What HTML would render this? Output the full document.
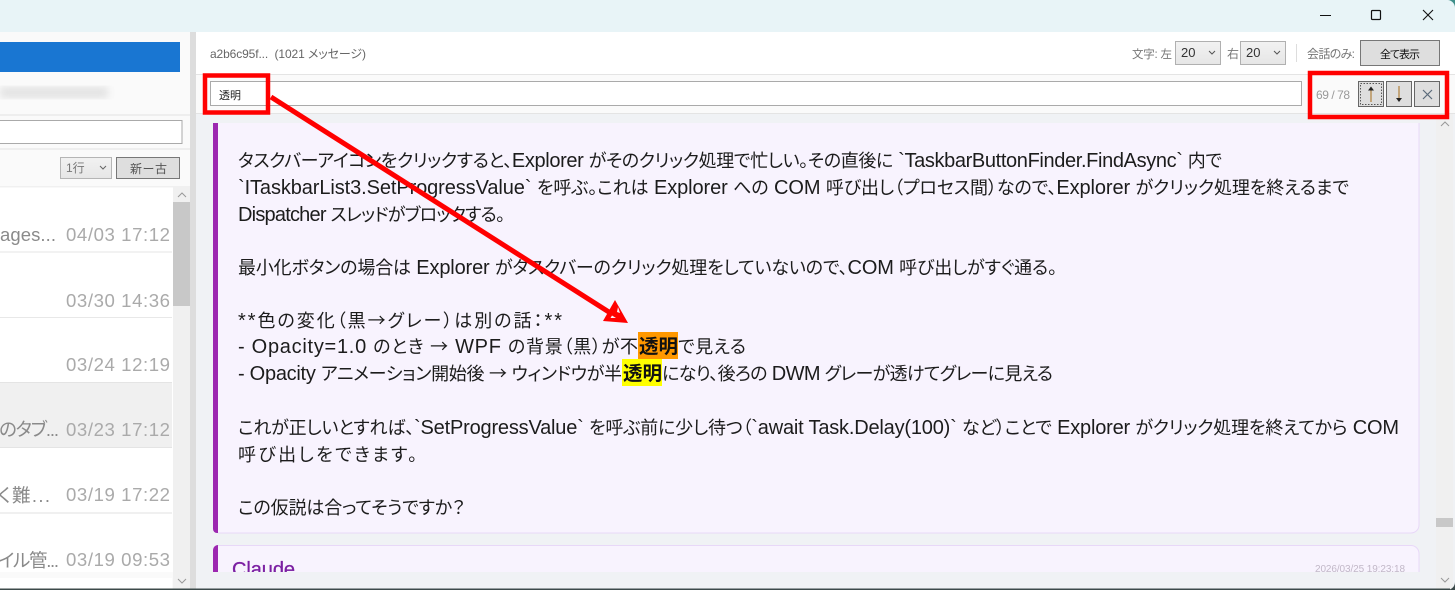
<!DOCTYPE html>
<html lang="ja"><head><meta charset="utf-8"><style>
html,body{margin:0;padding:0;width:1455px;height:590px;overflow:hidden;background:#f0f2f5}
svg{display:block}
text{font-family:"Liberation Sans","Noto Sans CJK JP",sans-serif;white-space:pre;font-feature-settings:"palt"}
.m{font-size:18px;fill:#1c1c1c}
.l{font-size:20px}
.d{font-size:18.600px;fill:#aaa}
.s{font-size:18.500px;fill:#8a8a8a}
.u{font-size:12px;fill:#777}
.a{font-family:"Noto Sans CJK JP",sans-serif}
</style></head><body>
<svg width="1455" height="590" viewBox="0 0 1455 590" xmlns="http://www.w3.org/2000/svg">
<defs>
<linearGradient id="sel" x1="0" y1="0" x2="0" y2="1"><stop offset="0" stop-color="#f2f2f2"/><stop offset="1" stop-color="#e6e6e6"/></linearGradient>
<filter id="bl"><feGaussianBlur stdDeviation="4"/></filter>
</defs>
<rect width="1455" height="590" fill="#f0f2f5"/>
<!-- title bar -->
<rect width="1455" height="32" fill="#e8f4f7"/>
<path d="M1320 15.500h11" stroke="#111" stroke-width="1"/>
<rect x="1371.500" y="10.500" width="9" height="9" rx="1" fill="none" stroke="#111" stroke-width="1.200"/>
<path d="M1423 10l10 10M1433 10l-10 10" stroke="#111" stroke-width="1.100"/>
<!-- left panel -->
<rect x="0" y="32" width="190" height="558" fill="#fafafa"/>
<rect x="0" y="42" width="180" height="30" fill="#1976d2"/>
<g filter="url(#bl)"><rect x="0" y="87" width="108" height="11" fill="#e2e2e2"/></g>
<rect x="0" y="114" width="190" height="2" fill="#eee"/>
<rect x="-2" y="120.500" width="184" height="23" fill="#fff" stroke="#aaa"/>
<rect x="0" y="148" width="190" height="2" fill="#eee"/>
<rect x="60.500" y="157.500" width="51" height="21" fill="url(#sel)" stroke="#b5b5b5"/>
<text x="66" y="172" class="u">1行</text>
<path d="M100 166l3 3 3-3" fill="none" stroke="#666"/>
<rect x="116.500" y="157.500" width="63" height="21" fill="#dedede" stroke="#777"/>
<text x="130" y="173" style="font-size:12px;fill:#555" textLength="37" lengthAdjust="spacing">新 ー 古</text>
<rect x="0" y="186" width="173" height="386" fill="#fff"/>
<rect x="0" y="186" width="190" height="1.500" fill="#f0f0f0"/>
<rect x="0" y="382" width="172" height="65" fill="#f0f0f0"/>
<rect x="0" y="251" width="172" height="2" fill="#f2f2f2"/>
<rect x="0" y="317" width="172" height="1" fill="#e8e8e8"/>
<rect x="0" y="382" width="172" height="1" fill="#e4e4e4"/>
<rect x="0" y="447" width="172" height="1" fill="#e4e4e4"/>
<rect x="0" y="512" width="172" height="2" fill="#f0f0f0"/>
<rect x="0" y="578" width="172" height="12" fill="#fff"/>
<rect x="173" y="186" width="17" height="404" fill="#f0f0f0"/>
<rect x="173" y="202" width="17" height="104" fill="#c8c8c8"/>
<path d="M178 197l4-4 4 4M178 579l4 4 4-4" fill="none" stroke="#999" stroke-width="1"/>
<text class="s" x="0" y="241" textLength="56" lengthAdjust="spacing">ages...</text>
<text class="s" x="-1" y="436" textLength="60" lengthAdjust="spacing">のタブ...</text>
<text class="s" x="-2" y="502" textLength="52" lengthAdjust="spacing">く難...</text>
<text class="s" x="-2" y="567" textLength="61" lengthAdjust="spacing">イル管...</text>
<text class="d" x="66" y="241" textLength="104" lengthAdjust="spacing">04/03 17:12</text>
<text class="d" x="66" y="307" textLength="104" lengthAdjust="spacing">03/30 14:36</text>
<text class="d" x="66" y="371" textLength="104" lengthAdjust="spacing">03/24 12:19</text>
<text class="d" x="66" y="436" textLength="104" lengthAdjust="spacing">03/23 17:12</text>
<text class="d" x="66" y="501" textLength="104" lengthAdjust="spacing">03/19 17:22</text>
<text class="d" x="66" y="566" textLength="104" lengthAdjust="spacing">03/19 09:53</text>
<!-- splitter -->
<rect x="190" y="32" width="6" height="558" fill="#ddd"/>
<!-- right header -->
<rect x="196" y="32" width="1259" height="42" fill="#fff"/>
<rect x="196" y="74" width="1259" height="1" fill="#e4e4e4"/>
<rect x="196" y="75" width="1259" height="38" fill="#fafafa"/>
<rect x="196" y="113" width="1259" height="1" fill="#e4e4e4"/>
<text x="210" y="58" style="font-size:12px;fill:#666" textLength="156" lengthAdjust="spacing">a2b6c95f...  (1021 メッセージ)</text>
<text x="1132" y="58" style="font-size:11.500px;fill:#777" textLength="40" lengthAdjust="spacing">文字: 左</text>
<rect x="1175.500" y="41.500" width="45" height="23" fill="url(#sel)" stroke="#b0b0b0"/>
<text x="1181" y="57" style="font-size:13px;fill:#333">20</text>
<path d="M1209 51l3 3 3-3" fill="none" stroke="#555"/>
<text x="1227" y="58" style="font-size:12px;fill:#777">右</text>
<rect x="1240.500" y="41.500" width="45" height="23" fill="url(#sel)" stroke="#b0b0b0"/>
<text x="1246" y="57" style="font-size:13px;fill:#333">20</text>
<path d="M1274 51l3 3 3-3" fill="none" stroke="#555"/>
<rect x="1296" y="44" width="1" height="18" fill="#ddd"/>
<text x="1307" y="58" style="font-size:12px;fill:#777" textLength="48" lengthAdjust="spacing">会話のみ:</text>
<rect x="1360.500" y="40.500" width="79" height="25" fill="#dedede" stroke="#777"/>
<text x="1380" y="58" style="font-size:11px;fill:#111" textLength="40" lengthAdjust="spacing">全て表示</text>
<!-- search -->
<rect x="210.500" y="81.500" width="1091" height="24" fill="#fff" stroke="#aaa"/>
<text x="219" y="99" style="font-size:11px;fill:#222">透明</text>
<text x="1316" y="99" style="font-size:12px;fill:#999" textLength="34" lengthAdjust="spacing">69 / 78</text>
<rect x="1358.500" y="81.500" width="25" height="25" fill="#dedede" stroke="#666"/>
<rect x="1360.500" y="83.500" width="21" height="21" fill="none" stroke="#555" stroke-dasharray="1.500 1.500"/>
<path d="M1371 102V89" stroke="#b8925a" stroke-width="1.500"/><path d="M1368 90.500l3-4 3 4z" fill="#222"/>
<rect x="1386.500" y="81.500" width="25" height="25" fill="#dedede" stroke="#666"/>
<path d="M1399 86v13" stroke="#b8925a" stroke-width="1.500"/><path d="M1396 98l3 4 3-4z" fill="#222"/>
<rect x="1414.500" y="81.500" width="25" height="25" fill="#dedede" stroke="#666"/>
<path d="M1423 90l9 9M1432 90l-9 9" stroke="#5a6a7a" stroke-width="1.200"/>
<!-- card 1 -->
<path d="M213 114H1419V525a8 8 0 0 1-8 8H221a8 8 0 0 1-8-8z" fill="#f8f3fe"/>
<path d="M1419 123V525a8 8 0 0 1-8 8H218" fill="none" stroke="#e8d8f8" stroke-width="1"/>
<path d="M213 123h5v410h-1a4 4 0 0 1-4-4z" fill="#9c27b0"/>
<rect x="196" y="114" width="1259" height="9" fill="#f0f2f5"/>
<text class="m" x="238" y="167" textLength="984" lengthAdjust="spacing">タスクバーアイコンをクリックすると、<tspan class="l">Explorer </tspan>がそのクリック処理で忙しい。その直後に<tspan class="l"> `TaskbarButtonFinder.FindAsync` </tspan>内で</text>
<text class="m" x="238" y="194" textLength="1111" lengthAdjust="spacing"><tspan class="l">`ITaskbarList3.SetProgressValue` </tspan>を呼ぶ。これは<tspan class="l"> Explorer </tspan>への<tspan class="l"> COM </tspan>呼び出し（プロセス間）なので、<tspan class="l">Explorer </tspan>がクリック処理を終えるまで</text>
<text class="m" x="238" y="221" textLength="267" lengthAdjust="spacing"><tspan class="l">Dispatcher </tspan>スレッドがブロックする。</text>
<text class="m" x="238" y="274" textLength="819" lengthAdjust="spacing">最小化ボタンの場合は<tspan class="l"> Explorer </tspan>がタスクバーのクリック処理をしていないので、<tspan class="l">COM </tspan>呼び出しがすぐ通る。</text>
<text class="m" x="238" y="327" textLength="324" lengthAdjust="spacing"><tspan class="l">**</tspan>色の変化（黒<tspan class="a">→</tspan>グレー）は別の話：<tspan class="l">**</tspan></text>
<rect x="638" y="332" width="40" height="27" fill="#ff9800"/>
<rect x="622" y="359" width="40" height="27" fill="#ffff00"/>
<text class="m" x="238" y="353" textLength="400" lengthAdjust="spacing"><tspan class="l">- Opacity=1.0 </tspan>のとき <tspan class="a">→</tspan><tspan class="l"> WPF </tspan>の背景（黒）が不</text>
<text class="m" x="639" y="353" style="font-size:19.500px;font-weight:700;fill:#111">透明</text>
<text class="m" x="678" y="353" textLength="68" lengthAdjust="spacing">で見える</text>
<text class="m" x="238" y="380" textLength="384" lengthAdjust="spacing"><tspan class="l">- Opacity </tspan>アニメーション開始後 <tspan class="a">→</tspan> ウィンドウが半</text>
<text class="m" x="623" y="380" style="font-size:19.500px;font-weight:700;fill:#111">透明</text>
<text class="m" x="662" y="380" textLength="391" lengthAdjust="spacing">になり、後ろの<tspan class="l"> DWM </tspan>グレーが透けてグレーに見える</text>
<text class="m" x="238" y="434" textLength="1161" lengthAdjust="spacing">これが正しいとすれば、<tspan class="l">`SetProgressValue` </tspan>を呼ぶ前に少し待つ（<tspan class="l">`await Task.Delay(100)` </tspan>など）ことで<tspan class="l"> Explorer </tspan>がクリック処理を終えてから<tspan class="l"> COM</tspan></text>
<text class="m" x="238" y="461" textLength="179" lengthAdjust="spacing">呼び出しをできます。</text>
<text class="m" x="238" y="514" textLength="227" lengthAdjust="spacing">この仮説は合ってそうですか？</text>
<!-- card 2 -->
<path d="M213 553a8 8 0 0 1 8-8H1411a8 8 0 0 1 8 8V572H213z" fill="#f8f3fe"/>
<path d="M218 545.500H1411a8 8 0 0 1 8 8V572" fill="none" stroke="#e8d8f8"/>
<path d="M213 572V550a5 5 0 0 1 5-5v27z" fill="#9c27b0"/>
<text x="232" y="576" style="font-size:20px;fill:#7b1fa2;font-weight:400;stroke:#7b1fa2;stroke-width:.3" textLength="63" lengthAdjust="spacing">Claude</text>
<text x="1315" y="572" style="font-size:10px;fill:#c2b8c8" textLength="90" lengthAdjust="spacing">2026/03/25 19:23:18</text>
<rect x="196" y="572" width="1259" height="18" fill="#f0f2f5"/>
<!-- right scrollbar -->
<rect x="1436" y="114" width="17" height="476" fill="#f0f0f0"/>
<rect x="1436" y="518" width="17" height="9" fill="#c8c8c8"/>
<path d="M1441 126l4-4 4 4M1441 578l4 4 4-4" fill="none" stroke="#999" stroke-width="1"/>
<!-- annotations -->
<g fill="none" stroke="#ff0000">
<rect x="205" y="75.500" width="63" height="37" stroke-width="4.500"/>
<rect x="1310" y="73" width="137" height="44" stroke-width="4.500"/>
<path d="M271 97L612 314" stroke-width="5"/>
</g>
<path d="M615 300L603 321L628 323Z" fill="#ff0000"/>
<path d="M612 315.500L610.500 318H616Z M618 307L620 313L617 312Z" fill="#f8f3fe"/>
<!-- bottom edge -->
<rect x="0" y="588.500" width="1450" height="1.500" fill="#3c4a4a"/>
<path d="M1455 582v8h-8a8 8 0 0 0 8-8z" fill="#3c4a4a"/>
<path d="M1448 0h7v8a8 8 0 0 0-7-8z" fill="#3f8f8a"/>
</svg>
</body></html>
